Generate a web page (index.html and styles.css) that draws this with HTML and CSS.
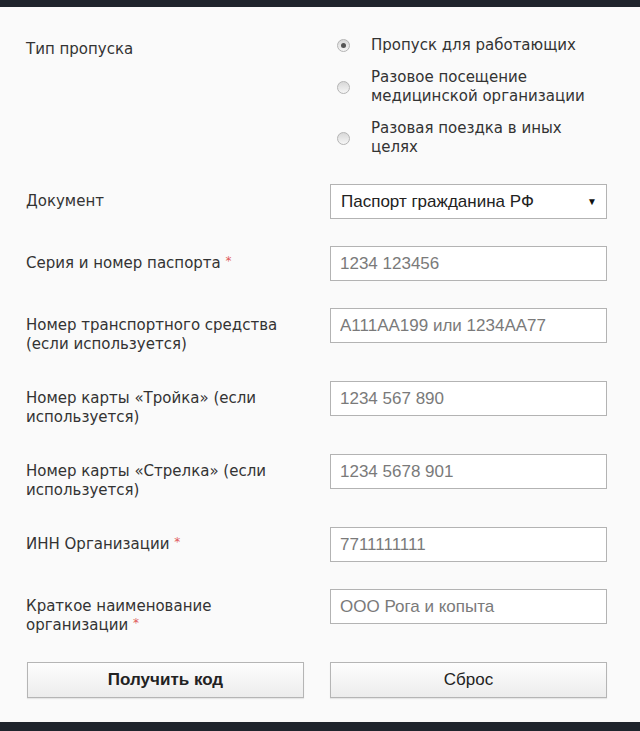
FILE: index.html
```html
<!DOCTYPE html>
<html lang="ru">
<head>
<meta charset="utf-8">
<title>Получение кода</title>
<link rel="stylesheet" href="styles.css">
</head>
<body>
<div class="topbar"></div>
<form class="form">
  <div class="row row-radio">
    <div class="label">Тип пропуска</div>
    <div class="control radios">
      <label class="radio"><span class="dot checked"></span><span class="rtext">Пропуск для работающих</span></label>
      <label class="radio"><span class="dot"></span><span class="rtext">Разовое посещение медицинской организации</span></label>
      <label class="radio"><span class="dot"></span><span class="rtext">Разовая поездка в иных целях</span></label>
    </div>
  </div>
  <div class="row">
    <div class="label">Документ</div>
    <div class="control">
      <div class="select"><span>Паспорт гражданина РФ</span><span class="arrow">▼</span></div>
    </div>
  </div>
  <div class="row">
    <div class="label">Серия и номер паспорта <span class="req">*</span></div>
    <div class="control"><input class="input" type="text" placeholder="1234 123456"></div>
  </div>
  <div class="row">
    <div class="label">Номер транспортного средства (если используется)</div>
    <div class="control"><input class="input" type="text" placeholder="А111АА199 или 1234АА77"></div>
  </div>
  <div class="row">
    <div class="label">Номер карты «Тройка» (если используется)</div>
    <div class="control"><input class="input" type="text" placeholder="1234 567 890"></div>
  </div>
  <div class="row">
    <div class="label">Номер карты «Стрелка» (если используется)</div>
    <div class="control"><input class="input" type="text" placeholder="1234 5678 901"></div>
  </div>
  <div class="row">
    <div class="label">ИНН Организации <span class="req">*</span></div>
    <div class="control"><input class="input" type="text" placeholder="7711111111"></div>
  </div>
  <div class="row">
    <div class="label"><span>Краткое наименование</span> <span class="nw">организации <span class="req">*</span></span></div>
    <div class="control"><input class="input" type="text" placeholder="ООО Рога и копыта"></div>
  </div>
  <div class="buttons">
    <button type="button" class="btn btn-primary">Получить код</button>
    <button type="button" class="btn">Сброс</button>
  </div>
</form>
<div class="bottombar"></div>
</body>
</html>
```
FILE: styles.css
```css
html, body {
  margin: 0;
  padding: 0;
}
body {
  width: 640px;
  height: 731px;
  background: #fafafa;
  font-family: "DejaVu Sans", Verdana, sans-serif;
  color: #333;
  display: flex;
  flex-direction: column;
  overflow: hidden;
}
.topbar {
  height: 7px;
  background: #1f242c;
  flex: none;
}
.bottombar {
  height: 9px;
  background: #1f242c;
  margin-top: auto;
  flex: none;
}
.form {
  display: flex;
  flex-direction: column;
  gap: 27px;
  padding: 29px 33px 0 26px;
}
.row {
  display: grid;
  grid-template-columns: 304px 277px;
  align-items: start;
}
.label {
  font-size: 15px;
  line-height: 19px;
  padding-top: 8px;
  padding-right: 30px;
}
.row-radio .label {
  padding-top: 4px;
}
.nw {
  white-space: nowrap;
}
.req {
  color: #e05a5a;
  font-size: 12px;
  line-height: 1;
  vertical-align: 3px;
}
.radios {
  display: flex;
  flex-direction: column;
  gap: 13px;
}
.radio {
  display: flex;
  align-items: center;
  font-size: 15px;
  line-height: 19px;
  padding-left: 7px;
}
.dot {
  flex: none;
  width: 11px;
  height: 11px;
  border: 1px solid #b4b4b4;
  border-radius: 50%;
  background: linear-gradient(#d8d8d8, #f6f6f6);
  margin-right: 21px;
  display: flex;
  align-items: center;
  justify-content: center;
}
.dot.checked::after {
  content: "";
  width: 5px;
  height: 5px;
  border-radius: 50%;
  background: #555;
}
.rtext {
  width: 236px;
}
.select, .input {
  box-sizing: border-box;
  width: 277px;
  height: 35px;
  border: 1px solid #b3b3b3;
  background: #fff;
  font-family: "Liberation Sans", Arial, sans-serif;
  font-size: 17px;
}
.select {
  display: flex;
  align-items: center;
  justify-content: space-between;
  padding: 0 9px 0 10px;
  color: #222;
}
.arrow {
  font-size: 10px;
  color: #111;
}
.input {
  display: block;
  margin: 0;
  padding: 0 9px;
  color: #333;
  outline: none;
}
.input::placeholder {
  color: #7a7a7a;
}
.buttons {
  display: grid;
  grid-template-columns: 277px 277px;
  gap: 26px;
  padding-left: 1px;
}
.btn {
  height: 36px;
  border: 1px solid #b5b5b5;
  background: linear-gradient(#fdfdfd, #ececec);
  font-family: "Liberation Sans", Arial, sans-serif;
  font-size: 17px;
  color: #222;
  box-shadow: 0 1px 1px rgba(0,0,0,0.08);
  padding: 0;
}
.btn-primary {
  font-weight: bold;
}
```
